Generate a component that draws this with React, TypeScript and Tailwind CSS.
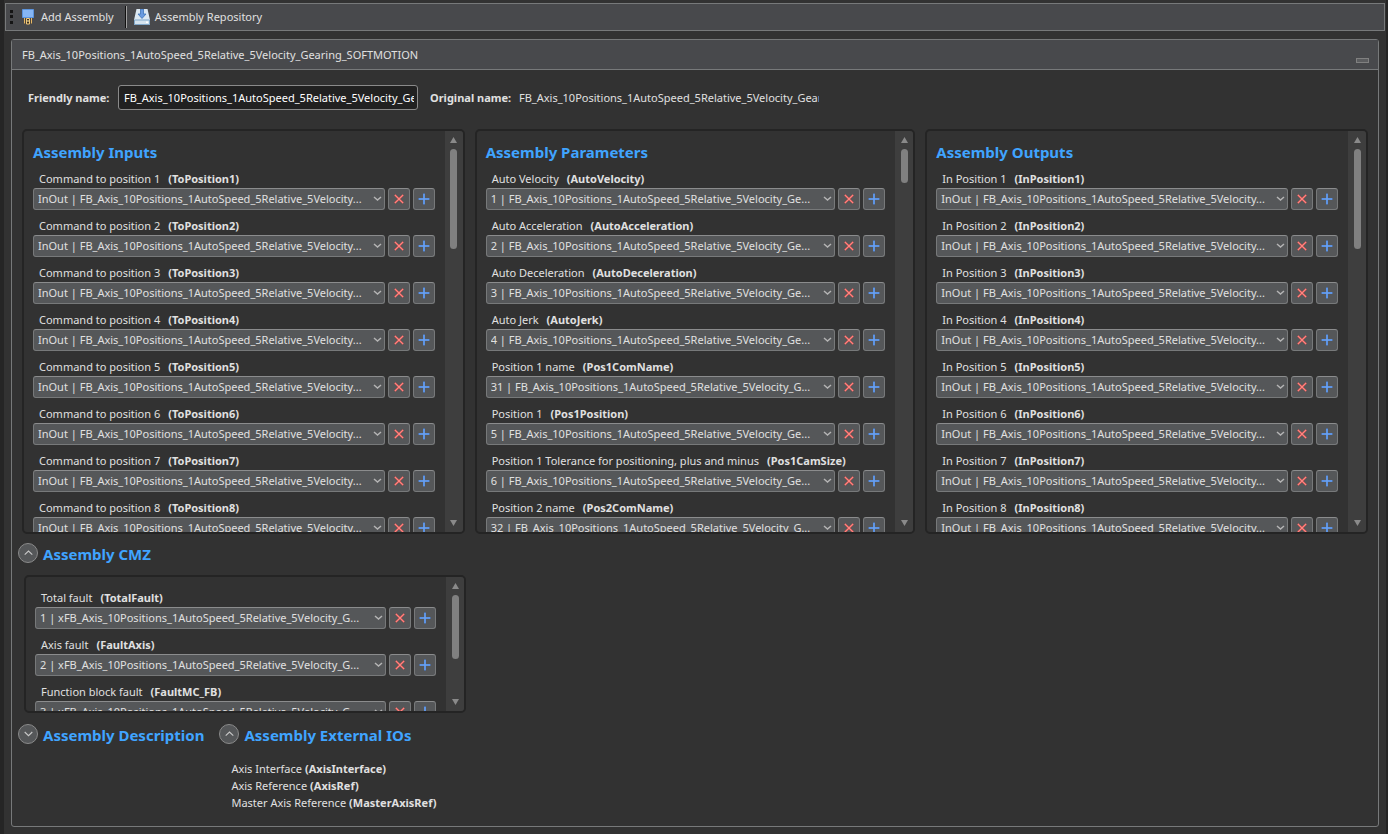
import React, { useState } from 'react';

type Field = { label: string; name: string; value: string };

const BLOCK = 'FB_Axis_10Positions_1AutoSpeed_5Relative_5Velocity';

const inputs: Field[] = [1, 2, 3, 4, 5, 6, 7, 8].map((n) => ({
  label: `Command to position ${n}`,
  name: `ToPosition${n}`,
  value: `InOut | ${BLOCK}...`,
}));

const outputs: Field[] = [1, 2, 3, 4, 5, 6, 7, 8].map((n) => ({
  label: `In Position ${n}`,
  name: `InPosition${n}`,
  value: `InOut | ${BLOCK}...`,
}));

const parameters: Field[] = [
  { label: 'Auto Velocity', name: 'AutoVelocity', value: `1 | ${BLOCK}_Ge...` },
  { label: 'Auto Acceleration', name: 'AutoAcceleration', value: `2 | ${BLOCK}_Ge...` },
  { label: 'Auto Deceleration', name: 'AutoDeceleration', value: `3 | ${BLOCK}_Ge...` },
  { label: 'Auto Jerk', name: 'AutoJerk', value: `4 | ${BLOCK}_Ge...` },
  { label: 'Position 1 name', name: 'Pos1ComName', value: `31 | ${BLOCK}_G...` },
  { label: 'Position 1', name: 'Pos1Position', value: `5 | ${BLOCK}_Ge...` },
  { label: 'Position 1 Tolerance for positioning, plus and minus', name: 'Pos1CamSize', value: `6 | ${BLOCK}_Ge...` },
  { label: 'Position 2 name', name: 'Pos2ComName', value: `32 | ${BLOCK}_G...` },
];

const cmz: Field[] = [
  { label: 'Total fault', name: 'TotalFault', value: `1 | x${BLOCK}_G...` },
  { label: 'Axis fault', name: 'FaultAxis', value: `2 | x${BLOCK}_G...` },
  { label: 'Function block fault', name: 'FaultMC_FB', value: `3 | x${BLOCK}_G...` },
];

const externals = [
  ['Axis Interface', 'AxisInterface'],
  ['Axis Reference', 'AxisRef'],
  ['Master Axis Reference', 'MasterAxisRef'],
];

const iconButton =
  'flex h-[22px] w-[22px] shrink-0 items-center justify-center rounded-[3px] border border-[#77797a] border-t-[#8b8c8d] bg-[#555759]';

const FieldRow: React.FC<{ field: Field }> = ({ field }) => (
  <div className="mb-[7px]">
    <label htmlFor={field.name} className="flex h-[18px] items-center gap-2 pl-[6px] whitespace-nowrap">
      {field.label} <b>({field.name})</b>
    </label>
    <div className="flex gap-[3px]">
      <div className="relative min-w-0 flex-1">
        <select
          id={field.name}
          className="block h-[22px] w-full appearance-none rounded-[3px] border border-[#77797a] border-t-[#8b8c8d] bg-[#555759] pr-4 pl-1"
        >
          <option>{field.value}</option>
        </select>
        <svg className="pointer-events-none absolute top-2 right-[3px] h-[6px] w-[9px]" viewBox="0 0 9 6" fill="none" stroke="#b4b4b4" strokeWidth="1.5">
          <path d="M1 1l3.5 3L8 1" />
        </svg>
      </div>
      <button aria-label={`Clear ${field.name}`} className={iconButton}>
        <svg className="h-[10px] w-[10px]" viewBox="0 0 10 10" fill="none">
          <path d="M.8.8l8.4 8.4M9.2.8L.8 9.2" stroke="#ee5f5c" strokeWidth="1.8" />
          <path d="M1 1l8 8M9 1L1 9" stroke="#ff9a94" strokeWidth=".7" />
        </svg>
      </button>
      <button aria-label={`Add ${field.name}`} className={iconButton}>
        <svg className="h-[12px] w-[12px]" viewBox="0 0 12 12" fill="none">
          <path d="M6 .5v11M.5 6h11" stroke="#4a82d8" strokeWidth="2" />
          <path d="M6 1v10M1 6h10" stroke="#7fb0f6" strokeWidth=".8" />
        </svg>
      </button>
    </div>
  </div>
);

const ScrollBar: React.FC<{ thumb: string }> = ({ thumb }) => (
  <div className="flex w-[18px] shrink-0 flex-col items-center bg-[#3e3e3e] py-[6px]">
    <svg className="mb-[6px] h-[6px] w-[7px]" viewBox="0 0 7 6" fill="#8a8a8a">
      <path d="M3.5 0L7 6H0z" />
    </svg>
    <div className="flex-1">
      <div className={`w-[7px] rounded-full bg-[#808080] ${thumb}`} />
    </div>
    <svg className="h-[6px] w-[7px]" viewBox="0 0 7 6" fill="#8a8a8a">
      <path d="M0 0h7L3.5 6z" />
    </svg>
  </div>
);

type PanelProps = { title?: string; fields: Field[]; thumb: string; size: string };

const Panel: React.FC<PanelProps> = ({ title, fields, thumb, size }) => (
  <section className={`flex overflow-hidden rounded-[5px] border-2 border-[#242424] ${size}`}>
    <div className="min-w-0 flex-1 pr-[10px] pl-[9px]">
      {title && <h2 className="mb-[6px] pt-[9px] text-[15px] leading-6 font-bold text-[#40a4ff]">{title}</h2>}
      {!title && <div className="h-[12px]" />}
      {fields.map((field) => (
        <FieldRow key={field.name} field={field} />
      ))}
    </div>
    <ScrollBar thumb={thumb} />
  </section>
);

const Expander: React.FC<{ title: string; open: boolean }> = ({ title, open }) => (
  <div className="flex h-[22px] items-center gap-[5px]">
    <button
      aria-label={title}
      aria-expanded={open}
      className="flex h-5 w-5 items-center justify-center rounded-full border border-[#8a8a8a] bg-[#555759]"
    >
      <svg className="h-[6px] w-[9px]" viewBox="0 0 9 6" fill="none" stroke="#c8c8c8" strokeWidth="1.1">
        <path d={open ? 'M.7 4.7L4.5 1l3.8 3.7' : 'M.7 1l3.8 3.7L8.3 1'} />
      </svg>
    </button>
    <h2 className="pt-px text-[15px] leading-6 font-bold whitespace-nowrap text-[#40a4ff]">{title}</h2>
  </div>
);

const AssemblyIcon = () => (
  <svg className="h-4 w-3" viewBox="0 0 12 16">
    <path d="M.5.5h11v8H.5z" fill="#86b6f4" stroke="#5b93dc" />
    <path d="M2 9.500h8V15H2z" fill="#4d4538" />
    <path d="M2.500 9v5.500M9.500 9v5.500" stroke="#e8b866" />
    <path d="M4.500 15V9.500h3V15z" fill="#3a2f20" stroke="#f2c878" />
    <path d="M5.500 11h1v2h-1z" fill="#fff0b0" />
  </svg>
);

const RepositoryIcon = () => (
  <svg className="h-4 w-4" viewBox="0 0 16 16">
    <path d="M2.500 0h11L16 11v4.500H0V11z" fill="#dce8f2" />
    <path d="M.5 11h15v4.500H.5z" fill="#d3e2ee" stroke="#7fa6c8" />
    <path d="M6.500 0h3v5H12l-4 4.500L4 5h2.500z" fill="#6a9be0" stroke="#3f73b8" strokeWidth=".8" />
    <path d="M12 12.500h2V14h-2z" fill="#fff" />
  </svg>
);

const App: React.FC = () => {
  const [friendlyName, setFriendlyName] = useState(`${BLOCK}_Gearing_SOFTMOTION`);

  return (
    <div className="min-h-screen bg-[#252525] pr-[2px] pl-1 font-['Noto_Sans','Open_Sans',sans-serif] text-[11px] leading-4 text-[#e0e0e0]">
      <div className="min-h-screen bg-[#323232] pt-[3px] pb-[7px]">
        <nav className="mr-px ml-px flex h-7 items-center border border-[#77797a] bg-[#48494c] pl-1">
          <div className="h-[14px] border-l-[3px] border-dotted border-[#151515]" />
          <button className="ml-[9px] flex items-center gap-[7px]">
            <AssemblyIcon />
            Add Assembly
          </button>
          <div className="ml-[11px] h-[22px] w-[2px] border-r border-[#a0a0a0] bg-[#111]" />
          <button className="ml-[7px] flex items-center gap-[5px]">
            <RepositoryIcon />
            Assembly Repository
          </button>
        </nav>

        <main className="mt-2 mr-[7px] ml-[7px] rounded-[3px] border border-[#77797a] pb-[15px]">
          <header className="flex h-[30px] items-center justify-between border-b border-[#77797a] bg-[#48494c] pr-[9px] pl-[10px]">
            <h1>{BLOCK}_Gearing_SOFTMOTION</h1>
            <button aria-label="Minimize" className="mt-3 h-[5px] w-[13px] border border-[#808080] bg-[#5c5d5f]" />
          </header>

          <div className="mt-[15px] flex items-center pl-4">
            <label htmlFor="friendly" className="w-[90px] font-bold whitespace-nowrap">
              Friendly name:
            </label>
            <input
              id="friendly"
              value={friendlyName}
              onChange={(e) => setFriendlyName(e.target.value)}
              className="h-[25px] w-[300px] rounded-[3px] border border-[#8a8a8a] bg-[#212121] pr-[3px] pl-[5px] text-white"
            />
            <b className="ml-3 w-[89px] whitespace-nowrap">Original name:</b>
            <span className="w-[300px] overflow-hidden whitespace-nowrap">{BLOCK}_Gearing_SOFTMOTION</span>
          </div>

          <div className="mt-[19px] grid grid-cols-[443fr_441fr_443fr] gap-[10px] px-[10px]">
            <Panel title="Assembly Inputs" fields={inputs} thumb="h-[100px]" size="h-[405px]" />
            <Panel title="Assembly Parameters" fields={parameters} thumb="h-[34px]" size="h-[405px]" />
            <Panel title="Assembly Outputs" fields={outputs} thumb="h-[100px]" size="h-[405px]" />
          </div>

          <div className="mt-[8px] pl-[6px]">
            <Expander title="Assembly CMZ" open />
          </div>
          <div className="mt-[11px] grid grid-cols-3 gap-[10px] pr-[8px] pl-3">
            <Panel fields={cmz} thumb="h-[64px]" size="h-[138px]" />
          </div>

          <div className="mt-[10px] flex gap-[15px] pl-[6px]">
            <Expander title="Assembly Description" open={false} />
            <div>
              <Expander title="Assembly External IOs" open />
              <ul className="mt-[15px] pl-3 leading-[17px]">
                {externals.map(([label, name]) => (
                  <li key={name} className="flex gap-[3px] whitespace-nowrap">
                    {label} <b>({name})</b>
                  </li>
                ))}
              </ul>
            </div>
          </div>
        </main>
      </div>
    </div>
  );
};

export default App;
